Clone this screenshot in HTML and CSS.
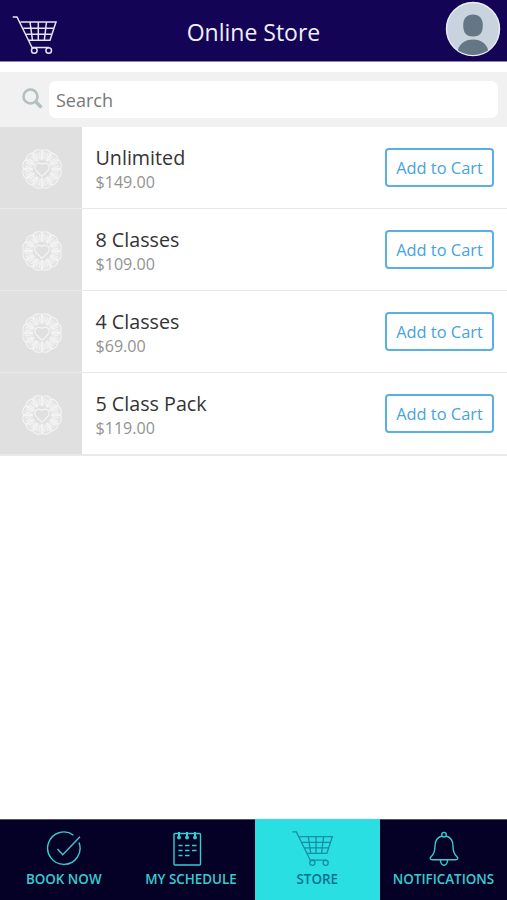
FILE: index.html
```html
<!DOCTYPE html>
<html lang="en">
<head>
<meta charset="utf-8">
<title>Online Store</title>
<link rel="stylesheet" href="styles.css">
</head>
<body>
<svg class="defs" aria-hidden="true">
  <symbol id="cart" viewBox="0 0 46 39">
    <path d="M0.7 1H5L20.5 32.5M8.5 6H44L38 24.3H16.5M11.5 12.3H42M14.3 18.3H40M18 6L20.5 24.3M26.3 6V24.3M34.5 6L32.3 24.3M19.5 31.5H37"/>
    <circle cx="22.3" cy="34.5" r="2.8"/><circle cx="36.7" cy="34.5" r="2.8"/>
  </symbol>
  <symbol id="emblem" viewBox="-21 -21 42 42">
    <circle r="13.5" stroke="#ffffff" stroke-opacity="0.22" stroke-width="9"/>
    <g id="quarter">
      <path id="petal" transform="rotate(15)" d="M-1.8-9C-2.3-12-4.8-14.5-5-16.5C-4.5-20.6 4.5-20.6 5-16.5C4.8-14.5 2.3-12 1.8-9M-1.7-16.5C-1.9-14.5-1.2-12.5-0.9-11M1.7-16.5C1.9-14.5 1.2-12.5 0.9-11"/>
      <use href="#petal" transform="rotate(30)"/>
      <use href="#petal" transform="rotate(60)"/>
    </g>
    <use href="#quarter" transform="rotate(90)"/>
    <use href="#quarter" transform="rotate(180)"/>
    <use href="#quarter" transform="rotate(270)"/>
    <path fill="#e0e0e0" d="M0 7.5L-6 1.5C-9.5-3-4.8-8-0-4.5C4.8-8 9.5-3 6 1.5Z"/>
  </symbol>
</svg>
<div class="app">
  <header class="header">
    <svg class="header-cart"><use href="#cart"/></svg>
    <h1>Online Store</h1>
    <svg class="avatar" viewBox="0 0 56 56">
      <defs><clipPath id="face"><circle cx="28" cy="28" r="26"/></clipPath></defs>
      <circle cx="28" cy="28" r="26.5" fill="#c8d3dd" stroke="#e9edf7" stroke-width="1.4"/>
      <g fill="#657785" clip-path="url(#face)">
        <path d="M28 13.5C34 13.5 37.8 17.5 37.8 24C37.8 31 35.5 35.5 28 35.5C20.5 35.5 18.2 31 18.2 24C18.2 17.5 22 13.5 28 13.5Z"/>
        <path d="M12 56V53C13 43 20 38.6 28 38.6S43 43 44 53V56Z"/>
      </g>
    </svg>
  </header>
  <div class="search">
    <svg class="search-icon" viewBox="0 0 22 22"><circle cx="8.5" cy="8.5" r="7"/><path d="M13.8 13.8L19.5 19.5" stroke-width="3.4"/></svg>
    <div class="search-field">Search</div>
  </div>
  <main class="list">
    <div class="item"><div class="thumb"><svg><use href="#emblem"/></svg></div><div class="info"><div class="name">Unlimited</div><div class="price">$149.00</div></div><button>Add to Cart</button></div>
    <div class="item"><div class="thumb"><svg><use href="#emblem"/></svg></div><div class="info"><div class="name">8 Classes</div><div class="price">$109.00</div></div><button>Add to Cart</button></div>
    <div class="item"><div class="thumb"><svg><use href="#emblem"/></svg></div><div class="info"><div class="name">4 Classes</div><div class="price">$69.00</div></div><button>Add to Cart</button></div>
    <div class="item"><div class="thumb"><svg><use href="#emblem"/></svg></div><div class="info"><div class="name">5 Class Pack</div><div class="price">$119.00</div></div><button>Add to Cart</button></div>
  </main>
  <nav class="tabs">
    <div class="tab">
      <svg viewBox="0 0 44 38"><path d="M31.5 5.2A16.2 16.2 0 1 0 37 12.5M15.5 19L20.7 24.8L38 6.8"/></svg>
      <span>BOOK NOW</span>
    </div>
    <div class="tab">
      <svg viewBox="0 0 44 38"><rect x="5" y="3.5" width="26.5" height="31.5" rx="1"/><path d="M10 2V7M18 2V7M26 2V7" stroke-width="2"/><path d="M9.5 15.5H13.5M16 15.5H20.5M23 15.5H27.5M9.5 20.5H13.5M16 20.5H20.5M23 20.5H27.5M9.5 25.5H13.5M16 25.5H20.5"/><g class="dots"><circle cx="10" cy="7.5" r="1.9"/><circle cx="18" cy="7.5" r="1.9"/><circle cx="26" cy="7.5" r="1.9"/></g></svg>
      <span>MY SCHEDULE</span>
    </div>
    <div class="tab active">
      <svg class="tab-cart"><use href="#cart"/></svg>
      <span>STORE</span>
    </div>
    <div class="tab">
      <svg viewBox="0 0 44 38"><circle cx="22" cy="4.7" r="2.3"/><path d="M19.8 6C15 7.5 13 11 13 16C13 22 12 24 9.5 26.2C7.5 28 7.8 29.7 10.5 29.7H33.5C36.2 29.7 36.5 28 34.5 26.2C32 24 31 22 31 16C31 11 29 7.5 24.2 6M18.5 30C18.2 37 25.8 37 25.5 30"/></svg>
      <span>NOTIFICATIONS</span>
    </div>
  </nav>
</div>
</body>
</html>
```
FILE: styles.css
```css
* { box-sizing: border-box; }
body { margin: 0; font-family: "Open Sans", "Noto Sans", sans-serif; background: #fff; }
.defs { display: block; width: 0; height: 0; }
svg { fill: none; flex: none; }
.app { width: 507px; height: 900px; display: flex; flex-direction: column; overflow: hidden; }
.header {
  height: 62px; flex: none; background: #130455; border-bottom: 1px solid #8a83b1;
  display: grid; grid-template-columns: 60px 1fr 60px; color: #f0effa;
}
.header-cart { width: 46px; height: 39px; margin: 16px 0 0 12px; stroke: #e6e4f4; stroke-width: 1.5; }
.header h1 { margin: 0; text-align: center; font-size: 23px; line-height: 64px; font-weight: 400; white-space: nowrap; }
.avatar { width: 56px; height: 56px; margin: 1px 0 0 -2px; }
.search { height: 55px; margin-top: 10px; flex: none; background: #f1f1f1; display: flex; align-items: center; padding: 0 9px 0 22px; }
.search-icon { width: 22px; height: 22px; margin-right: 5px; margin-top: -1px; stroke: #b4bfc2; stroke-width: 2.6; }
.search-field { flex: 1; height: 37px; border-radius: 7px; background: #fff; padding-left: 7px; font-size: 18px; line-height: 38px; color: #777; }
.list { flex: 1; }
.item { height: 82px; display: flex; border-bottom: 1px solid #e9e9e9; padding-right: 13px; }
.item:last-child { height: 83px; border-bottom-width: 2px; }
.thumb { width: 82px; height: 81px; background: #e0e0e0; display: flex; align-items: center; justify-content: center; }
.thumb svg { width: 42px; height: 42px; margin-left: 1px; margin-top: 2px; stroke: #f4f4f4; stroke-width: 1.15; }
.info { flex: 1; padding: 17px 0 0 13.5px; }
.name { font-size: 19.7px; line-height: 27px; color: #333; }
.price { font-size: 16.1px; line-height: 23px; color: #929292; }
button { width: 109px; height: 39px; margin-top: 21px; padding: 1px 0 0; border: 2px solid #5aafe3; border-radius: 4px; background: #fff; color: #45a3dd; font: 16.4px/34px "Open Sans", "Noto Sans", sans-serif; }
.tabs { height: 81px; flex: none; display: grid; grid-template-columns: 127.5px 127px 125.5px 127px; background: #050026; border-top: 1px solid #55516b; }
.tab { display: flex; flex-direction: column; align-items: center; padding-top: 10px; color: #38cccf; font-size: 13.4px; line-height: 18px; font-weight: 600; white-space: nowrap; }
.tab svg { width: 44px; height: 38px; stroke: #38cccf; stroke-width: 1.4; }
.tab span { margin-top: 2px; }
.tab .dots { fill: #38cccf; stroke: none; }
.tab.active { background: #2adfe1; color: #086f93; margin-top: -1px; padding-top: 11px; }
.tab.active .tab-cart { height: 36px; margin: 1px 9px 1px 0; stroke: #168da5; }
```
